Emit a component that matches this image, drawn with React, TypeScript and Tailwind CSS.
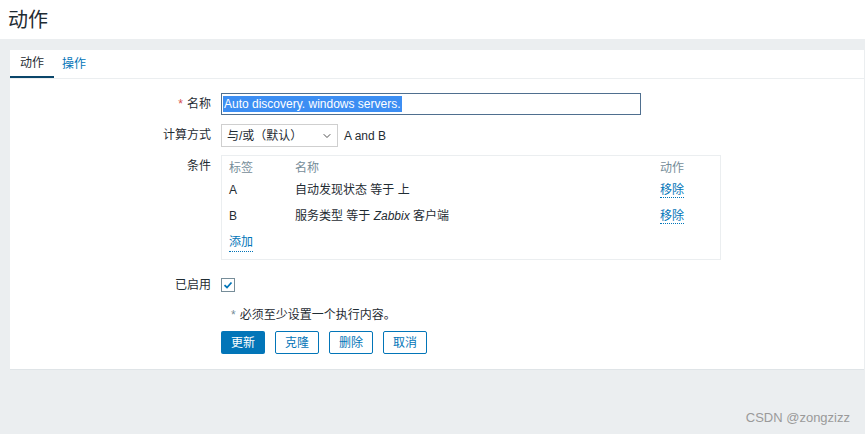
import { ChevronDown } from "lucide-react";

const font = "font-['Liberation_Sans','Noto_Sans_CJK_SC',sans-serif]";

function Row({ label, required, children, className = "" }: { label: string; required?: boolean; children: React.ReactNode; className?: string }) {
  return (
    <div className={`flex ${className}`}>
      <div className="w-[202px] pr-[1px] text-right text-[12px] text-[#1f2c33] leading-[22px]">
        {required && <span className="text-[#d64e4e] mr-1">*</span>}
        {label}
      </div>
      <div className="ml-[9px] flex-1">{children}</div>
    </div>
  );
}

export default function App() {
  const conditions = [
    { tag: "A", name: <>自动发现状态 等于 上</> },
    { tag: "B", name: <>服务类型 等于 <i>Zabbix</i> 客户端</> },
  ];

  return (
    <div className={`${font} w-[865px] h-[434px] bg-[#ebeef0] flex flex-col overflow-hidden relative`}>
      {/* Header */}
      <div className="h-[39px] bg-white px-[8px] flex items-center">
        <h1 className="text-[20px] text-[#1f2c33]">动作</h1>
      </div>

      {/* Panel */}
      <div className="mt-[11px] ml-[10px] mr-[1px] bg-white border-b border-[#dfe4e7] pb-[15px]">
        {/* Tabs */}
        <div className="flex h-[29px] border-b border-[#ebeef0] text-[12px]">
          <div className="px-[10px] flex items-center border-b-2 border-[#0a466a] text-[#1f2c33]">动作</div>
          <div className="px-[8px] flex items-center text-[#0275b8]">操作</div>
        </div>

        <div className="pt-[14px] flex flex-col">
          <Row label="名称" required>
            <div className="w-[420px] h-[22px] border border-[#4f6f8f] flex items-center px-[1px]">
              <span className="bg-[#3c8ef3] text-white text-[12px] leading-[16px] px-[1px]">
                Auto discovery. windows servers.
              </span>
            </div>
          </Row>

          <Row label="计算方式" className="mt-[9px]">
            <div className="flex items-center">
              <div className="w-[117px] h-[23px] border border-[#cfcfcf] flex items-center justify-between pl-[5px] pr-[4px] text-[12px] text-[#1f2c33]">
                <span>与/或（默认）</span>
                <ChevronDown size={12} strokeWidth={2} className="text-[#4f4f4f]" />
              </div>
              <span className="ml-[6px] text-[12px] text-[#1f2c33]">A and B</span>
            </div>
          </Row>

          <Row label="条件" className="mt-[8px]">
            <div className="w-[500px] h-[105px] border border-[#ebeef0] px-[7px] pt-[2px] text-[12px]">
              <div className="flex h-[19px] items-center text-[#768d99]">
                <span className="w-[66px]">标签</span>
                <span className="flex-1">名称</span>
                <span className="w-[53px]">动作</span>
              </div>
              {conditions.map((c) => (
                <div key={c.tag} className="flex h-[26px] items-center text-[#1f2c33]">
                  <span className="w-[66px]">{c.tag}</span>
                  <span className="flex-1">{c.name}</span>
                  <span className="w-[53px] text-[#0275b8]">
                    <span className="border-b border-dotted border-[#0275b8]">移除</span>
                  </span>
                </div>
              ))}
              <div className="flex h-[26px] items-center text-[#0275b8]">
                <span className="border-b border-dotted border-[#0275b8]">添加</span>
              </div>
            </div>
          </Row>

          <Row label="已启用" className="mt-[14px]">
            <div className="h-[22px] flex items-center">
              <div className="w-[14px] h-[14px] border border-[#768d99] flex items-center justify-center">
                <svg width="10" height="10" viewBox="0 0 10 10">
                  <path d="M1.5 5.2 L4 7.5 L8.5 2.5" fill="none" stroke="#0275b8" strokeWidth="1.8" />
                </svg>
              </div>
            </div>
          </Row>

          <div className="ml-[221px] mt-[10px] text-[12px] text-[#1f2c33]">
            <span className="text-[#768d99] mr-1">*</span>必须至少设置一个执行内容。
          </div>

          <div className="ml-[211px] mt-[7px] flex gap-[10px] text-[12px]">
            <button className="w-[44px] h-[23px] rounded-[2px] bg-[#0275b8] text-white">更新</button>
            <button className="w-[44px] h-[23px] rounded-[2px] border border-[#0275b8] text-[#0275b8] bg-white">克隆</button>
            <button className="w-[44px] h-[23px] rounded-[2px] border border-[#0275b8] text-[#0275b8] bg-white">删除</button>
            <button className="w-[44px] h-[23px] rounded-[2px] border border-[#0275b8] text-[#0275b8] bg-white">取消</button>
          </div>
        </div>
      </div>

      <div className="absolute right-[15px] bottom-[7px] text-[13px] text-[#9a9a9a] font-['Liberation_Sans',sans-serif]">
        CSDN @zongzizz
      </div>
    </div>
  );
}
